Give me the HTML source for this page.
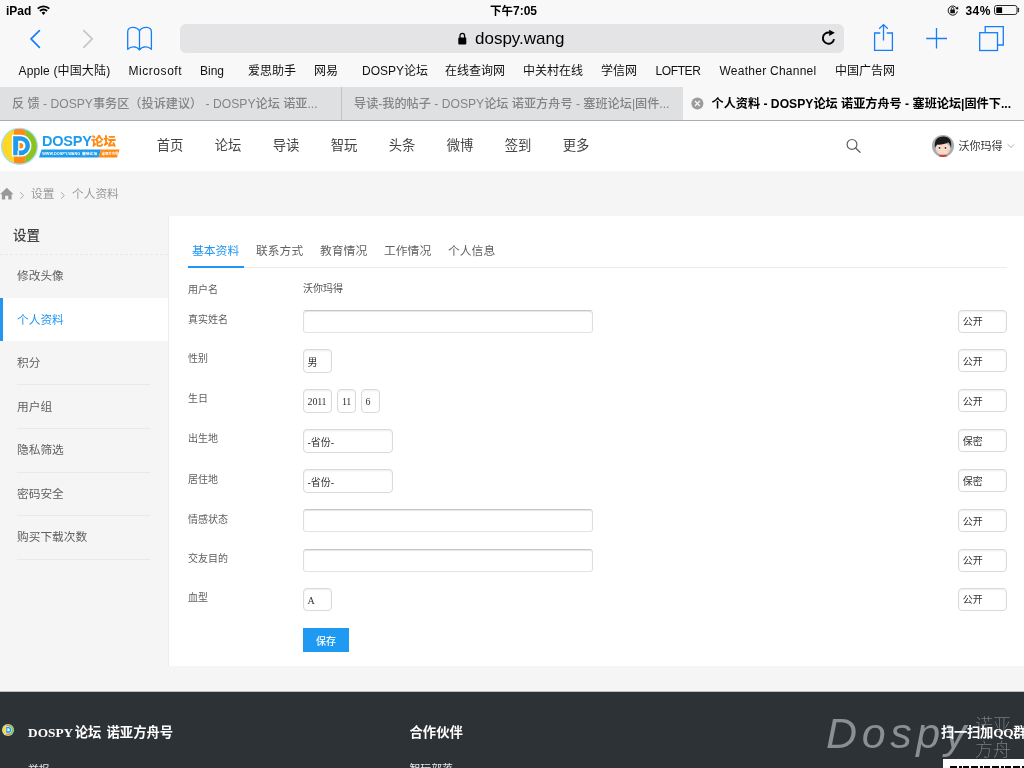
<!DOCTYPE html>
<html lang="zh-CN">
<head>
<meta charset="utf-8">
<title>个人资料 - DOSPY论坛 诺亚方舟号</title>
<style>
*{box-sizing:border-box;margin:0;padding:0}
html,body{width:1024px;height:768px;overflow:hidden;background:#f5f5f5}
body{font-family:"Liberation Sans","Noto Sans CJK SC",sans-serif;color:#333;position:relative;will-change:transform}
.abs{position:absolute}
.t{position:absolute;white-space:nowrap;line-height:1}
/* iOS chrome */
#chrome{position:absolute;left:0;top:0;width:1024px;height:121px;background:#f8f8f8}
#status .t{font-size:12px;font-weight:bold;color:#000;top:5px}
#urlbar{position:absolute;left:180px;top:24px;width:664px;height:29px;border-radius:6px;background:#e4e4e6}
#bm .t{font-size:12px;color:#111;top:65px}
#tabs{position:absolute;left:0;top:87px;width:1024px;height:34px;background:#dfe0e2;border-bottom:1px solid #acacae}
#tabs .tab{position:absolute;top:0;height:33px;font-size:12.150px;font-weight:500;line-height:34px;color:#848486;white-space:nowrap;overflow:hidden}
/* site */
#hdr{position:absolute;left:0;top:121px;width:1024px;height:50px;background:#fff}
#hdr .nav{position:absolute;top:18.300px;font-size:13.330px;color:#444;margin-left:.700px;line-height:1;white-space:nowrap}
#crumb{position:absolute;left:0;top:171px;width:1024px;height:44px;background:#f5f5f5}
#side{position:absolute;left:0;top:216px;width:168px;height:450px;background:#f5f5f5}
#side .it{position:absolute;left:17px;font-size:11.700px;color:#606060;line-height:1;white-space:nowrap}
#side .ln{position:absolute;left:17px;width:133px;height:1px;background:#e9e9e9}
#main{position:absolute;left:168px;top:216px;width:856px;height:450px;background:#fff;border-left:1px solid #ececec}
.lab{position:absolute;left:188px;font-size:10px;color:#606060;line-height:1;white-space:nowrap}
.inp{position:absolute;background:#fff;border:1px solid #dadada;border-radius:4px;box-shadow:inset 0 1px 2px rgba(0,0,0,.07);font-size:10px;color:#333;line-height:1;white-space:nowrap}
.inp.txt{border-color:#c6c6c6 #dedede #e3e3e3 #dedede;box-shadow:inset 0 1px 1px rgba(0,0,0,.10);border-radius:3.500px}
.inp span{position:absolute;left:3.500px;top:7.500px}
.inp.r span{top:6.500px;left:3.800px}
.inp.ser span{top:6.800px;left:3.600px;letter-spacing:-.2px}
.ser{font-family:"Liberation Serif","Noto Serif CJK SC",serif}
#foot{position:absolute;left:0;top:691px;width:1024px;height:77px;background:#2d3236;overflow:hidden;box-shadow:inset 0 1px 0 #bfc0c1}
</style>
</head>
<body>
<div id="chrome">
  <div id="status">
    <span class="t" style="left:6px">iPad</span>
    <span class="t" style="left:490px"><span style="font-size:11.500px">下午</span>7:05</span>
    <span class="t" style="left:965.500px;letter-spacing:.4px">34%</span>
  </div>
  <div id="urlbar"></div>
  <span class="t" style="left:475px;top:30px;font-size:17px;color:#000">dospy.wang</span>
  <div id="bm">
    <span class="t" style="left:18.500px;letter-spacing:.15px">Apple (中国大陆)</span>
    <span class="t" style="left:128.500px;letter-spacing:.55px">Microsoft</span>
    <span class="t" style="left:200px">Bing</span>
    <span class="t" style="left:248px">爱思助手</span>
    <span class="t" style="left:314px">网易</span>
    <span class="t" style="left:362px">DOSPY论坛</span>
    <span class="t" style="left:445px">在线查询网</span>
    <span class="t" style="left:523px">中关村在线</span>
    <span class="t" style="left:601px">学信网</span>
    <span class="t" style="left:655.500px;letter-spacing:-.4px">LOFTER</span>
    <span class="t" style="left:719.500px;letter-spacing:.25px">Weather Channel</span>
    <span class="t" style="left:835px">中国广告网</span>
  </div>
  <div id="tabs">
    <div class="tab" style="left:0;width:341px;padding-left:12px">反 馈 - DOSPY事务区（投诉建议） - DOSPY论坛 诺亚...</div>
    <div class="tab" style="left:341px;width:342px;padding-left:12px;border-left:1px solid #c2c3c5">导读-我的帖子 - DOSPY论坛 诺亚方舟号 - 塞班论坛|固件...</div>
    <div class="tab" style="left:683px;width:341px;padding-left:28.500px;background:#f8f8f8;color:#000;font-weight:bold">个人资料 - <b>DOSPY</b>论坛 诺亚方舟号 - 塞班论坛|固件下...</div>
  </div>
  <svg class="abs" style="left:0;top:0" width="1024" height="121" viewBox="0 0 1024 121" fill="none">
    <!-- wifi -->
    <g stroke="#000" stroke-width="1.8">
      <path d="M37.700,8.700 A8.200,8.200 0 0 1 49.300,8.700"/>
      <path d="M39.900,11 A5.100,5.100 0 0 1 47.100,11"/>
    </g>
    <path d="M41.600,12.700 A2.700,2.700 0 0 1 45.400,12.700 L43.500,14.900 Z" fill="#000"/>
    <!-- rotation lock -->
    <path d="M956.9,8.6 A4.6,4.6 0 1 0 957.3,11.3" stroke="#111" stroke-width="1"/>
    <path d="M955.3,8.9 L958.3,9.6 L958.1,6.6 Z" fill="#111"/>
    <rect x="950.3" y="9.6" width="4.6" height="3.6" rx=".5" fill="#111"/>
    <path d="M951.3,9.8 V8.7 A1.3,1.3 0 0 1 953.9,8.700 V9.8" stroke="#111" stroke-width=".9"/>
    <!-- battery -->
    <rect x="994.500" y="5.500" width="22.500" height="9" rx="2.200" stroke="#2a2a2a" stroke-width="1"/>
    <rect x="996.300" y="7.200" width="5.800" height="5.700" rx=".5" fill="#000"/>
    <path d="M1018.400,8.300 V11.700" stroke="#2a2a2a" stroke-width="1.300" stroke-linecap="round"/>
    <!-- back / forward -->
    <path d="M39.4,30.6 L31,38.9 L39.4,47.3" stroke="#147efb" stroke-width="1.7" stroke-linecap="round" stroke-linejoin="round"/>
    <path d="M83.8,30.6 L92.2,38.9 L83.800,47.3" stroke="#c6c6c6" stroke-width="1.7" stroke-linecap="round" stroke-linejoin="round"/>
    <!-- book -->
    <path d="M139.5,30.8 C136.500,26.3 127.700,26 127.700,32 V49.300 C131,45.800 137,46.200 139.500,50 C142,46.200 148,45.800 151.400,49.300 V32 C151.400,26 142.500,26.300 139.500,30.800 V50" stroke="#147efb" stroke-width="1.3" stroke-linejoin="round"/>
    <!-- lock -->
    <rect x="458.300" y="37.500" width="8" height="7" rx="1" fill="#000"/>
    <path d="M460,38 V35.800 A2.300,2.500 0 0 1 464.600,35.800 V38" stroke="#000" stroke-width="1.300"/>
    <!-- reload -->
    <path d="M829.500,32.600 A5.600,5.600 0 1 0 834,39.100" stroke="#000" stroke-width="1.900"/>
    <path d="M829.200,29.700 L834.800,32.800 L829.200,35.900 Z" fill="#000"/>
    <!-- share -->
    <path d="M880.300,33 H874.600 V50.300 H892.400 V33 H886.700" stroke="#147efb" stroke-width="1.300"/>
    <path d="M883.500,40.500 V25 M879.200,28.800 L883.500,24.600 L887.800,28.800" stroke="#147efb" stroke-width="1.300"/>
    <!-- plus -->
    <path d="M926.200,38.500 H947 M936.500,28.100 V48.600" stroke="#147efb" stroke-width="1.300"/>
    <!-- tabs -->
    <rect x="979.700" y="32.700" width="17.800" height="17.800" stroke="#147efb" stroke-width="1.300"/>
    <path d="M985.200,32.200 V26.700 H1003.300 V45 H998" stroke="#147efb" stroke-width="1.300"/>
    <!-- tab close -->
    <circle cx="697.400" cy="103.500" r="6" fill="#9b9b9b"/>
    <path d="M694.900,101 L699.900,106 M699.900,101 L694.900,106" stroke="#f8f8f8" stroke-width="1.200"/>
  </svg>
</div>

<div id="hdr">
  <svg class="abs" style="left:0;top:0" width="1024" height="50" viewBox="0 121 1024 50">
    <!-- logo badge -->
    <defs><clipPath id="lc"><circle cx="19.500" cy="146.300" r="17.300"/></clipPath></defs>
    <circle cx="19.500" cy="146.300" r="18.600" fill="#a9dcfa"/>
    <g clip-path="url(#lc)">
      <rect x="0" y="126" width="14" height="42" fill="#fdd825"/>
      <rect x="14" y="126" width="11.500" height="42" fill="#ff8a14"/>
      <rect x="25.500" y="126" width="14" height="42" fill="#8ec31f"/>
    </g>
    <path d="M12.500,135.500 H20.500 A10.200,10.200 0 0 1 20.500,155.900 H12.500 Z" fill="#1e9bea" stroke="#fff" stroke-width="1.400" stroke-linejoin="round"/>
    <path d="M18.200,140.800 H20.600 A4.900,4.900 0 0 1 20.600,150.600 H18.200 Z" fill="#fff"/>
    <path d="M18.200,150.600 V156.500" stroke="#fff" stroke-width="1.300"/>
    <path d="M19.500,143 H20.600 A2.700,2.700 0 0 1 20.600,148.400 H19.500 Z" fill="#ff8a14"/>
    <!-- banner -->
    <path d="M41.600,149.500 H101 L98.600,157.600 H39 Z" fill="#1e9bea"/>
    <path d="M101,149.500 H119.500 L117,157.600 H98.600 Z" fill="#ff8a14"/>
    <text x="42.200" y="155.300" font-family="Liberation Sans, sans-serif" font-weight="bold" font-size="4.100" fill="#fff" textLength="38" lengthAdjust="spacingAndGlyphs">WWW.DOSPY.WANG</text>
    <text x="82" y="155.300" font-family="Liberation Sans, Noto Sans CJK SC, sans-serif" font-weight="bold" font-size="3.800" fill="#fff">塞班论坛</text>
    <text x="101.500" y="155.200" font-family="Liberation Sans, Noto Sans CJK SC, sans-serif" font-weight="bold" font-size="3.400" fill="#fff">诺亚方舟号</text>
    <!-- search -->
    <circle cx="852" cy="144.400" r="4.900" fill="none" stroke="#5a5f66" stroke-width="1.200"/>
    <path d="M855.600,148 L860,152.300" stroke="#5a5f66" stroke-width="1.300" stroke-linecap="round"/>
    <!-- avatar -->
    <defs><clipPath id="ac"><circle cx="943" cy="145.900" r="11"/></clipPath></defs>
    <circle cx="943" cy="145.900" r="11" fill="#a4aeb3"/>
    <g clip-path="url(#ac)">
      <ellipse cx="943" cy="157.600" rx="4.800" ry="3.200" fill="#d63a35"/>
      <ellipse cx="943" cy="148.800" rx="7.300" ry="6" fill="#fbdac6"/>
      <path d="M935,148.300 C933.800,140 937.500,136.600 943.400,136.600 C949.500,136.600 952.300,140.500 951,148.300 C950.600,146 950,143.800 948.300,142.300 C946,144.200 940.500,144.800 937.300,144.600 C936,145.500 935.400,146.800 935,148.300 Z" fill="#1d1a1a"/>
      <circle cx="939.300" cy="147.900" r="1.500" fill="#fff"/>
      <circle cx="945.700" cy="147.900" r="1.500" fill="#fff"/>
      <circle cx="939.500" cy="147.900" r=".900" fill="#1d1a1a"/>
      <circle cx="945.500" cy="147.900" r=".900" fill="#1d1a1a"/>
      <circle cx="937.300" cy="150.600" r="1.100" fill="#f6b9a8" opacity=".7"/>
      <circle cx="948.300" cy="150.600" r="1.100" fill="#f6b9a8" opacity=".7"/>
    </g>
    <!-- chevron -->
    <path d="M1007.600,144.200 L1011,147.500 L1014.400,144.200" fill="none" stroke="#b0b0b0" stroke-width="1"/>
  </svg>
  <span class="t" style="left:42px;top:12.500px;font-size:14.500px;font-weight:bold;color:#1e9bea;letter-spacing:-.2px">DOSPY</span>
  <span class="t" style="left:91px;top:14.500px;font-size:12.500px;font-weight:900;color:#ff8a14;font-family:'Liberation Sans','Noto Sans CJK SC',sans-serif">论坛</span>
  <span class="nav" style="left:156px">首页</span>
  <span class="nav" style="left:214px">论坛</span>
  <span class="nav" style="left:272px">导读</span>
  <span class="nav" style="left:330px">智玩</span>
  <span class="nav" style="left:388px">头条</span>
  <span class="nav" style="left:446px">微博</span>
  <span class="nav" style="left:504px">签到</span>
  <span class="nav" style="left:562px">更多</span>
  <span class="t" style="left:958.500px;top:19.600px;font-size:11px;color:#333">沃你玛得</span>
</div>
<div id="crumb">
  <svg class="abs" style="left:0;top:0" width="130" height="44" viewBox="0 171 130 44">
    <path d="M0,194.200 L6.800,187.800 L13.500,194.200 H11.600 V199.500 H8.300 V195.800 H5.200 V199.500 H1.900 V194.200 Z" fill="#999"/>
    <path d="M20.200,192.200 L23.600,195.500 L20.200,198.800" fill="none" stroke="#aaa" stroke-width="1"/>
    <path d="M61,192.200 L64.400,195.500 L61,198.800" fill="none" stroke="#aaa" stroke-width="1"/>
  </svg>
  <span class="t" style="left:31px;top:17.400px;font-size:11.700px;color:#999">设置</span>
  <span class="t" style="left:72px;top:17.400px;font-size:11.700px;color:#999">个人资料</span>
</div>
<div id="side">
  <span class="t" style="left:13px;top:13.400px;font-size:13.500px;font-weight:500;color:#444">设置</span>
  <div class="abs" style="left:0;top:38px;width:168px;height:0;border-top:1px dashed #e9e9e9"></div>
  <div class="abs" style="left:0;top:82px;width:170px;height:43px;background:#fff;border-left:3px solid #2196f3"></div>
  <span class="it" style="top:53.5px">修改头像</span>
  <span class="it" style="top:97.5px;color:#2196f3">个人资料</span>
  <span class="it" style="top:140.5px">积分</span>
  <span class="it" style="top:184.5px">用户组</span>
  <span class="it" style="top:227.7px">隐私筛选</span>
  <span class="it" style="top:271.7px">密码安全</span>
  <span class="it" style="top:314.7px">购买下载次数</span>
  <div class="ln" style="top:168px"></div>
  <div class="ln" style="top:212px"></div>
  <div class="ln" style="top:256px"></div>
  <div class="ln" style="top:299px"></div>
  <div class="ln" style="top:343px"></div>
</div>
<div id="main"></div>
<div id="form">
  <span class="t" style="left:192px;top:246px;font-size:11.800px;color:#2196f3">基本资料</span>
  <span class="t" style="left:256px;top:246px;font-size:11.800px;color:#626262">联系方式</span>
  <span class="t" style="left:320px;top:246px;font-size:11.800px;color:#626262">教育情况</span>
  <span class="t" style="left:384px;top:246px;font-size:11.800px;color:#626262">工作情况</span>
  <span class="t" style="left:448px;top:246px;font-size:11.800px;color:#626262">个人信息</span>
  <div class="abs" style="left:187px;top:267px;width:820px;height:1px;background:#ebebeb"></div>
  <div class="abs" style="left:188px;top:265.500px;width:56px;height:2px;background:#2196f3"></div>

  <span class="lab" style="top:285px">用户名</span>
  <span class="lab" style="top:315px">真实姓名</span>
  <span class="lab" style="top:354px">性别</span>
  <span class="lab" style="top:394px">生日</span>
  <span class="lab" style="top:434px">出生地</span>
  <span class="lab" style="top:475px">居住地</span>
  <span class="lab" style="top:515px">情感状态</span>
  <span class="lab" style="top:554px">交友目的</span>
  <span class="lab" style="top:593px">血型</span>
  <span class="t" style="left:303px;top:284px;font-size:10px;color:#555">沃你玛得</span>

  <div class="inp txt" style="left:303px;top:309.700px;width:290px;height:23px"></div>
  <div class="inp" style="left:303px;top:349px;width:29px;height:23.500px"><span>男</span></div>
  <div class="inp ser" style="left:303px;top:389px;width:29px;height:23.500px"><span>2011</span></div>
  <div class="inp ser" style="left:337.300px;top:389px;width:18.500px;height:23.500px"><span>11</span></div>
  <div class="inp ser" style="left:361px;top:389px;width:18.800px;height:23.500px"><span>6</span></div>
  <div class="inp" style="left:303px;top:429px;width:90px;height:23.500px"><span>-省份-</span></div>
  <div class="inp" style="left:303px;top:469px;width:90px;height:23.500px"><span>-省份-</span></div>
  <div class="inp txt" style="left:303px;top:509.200px;width:290px;height:23px"></div>
  <div class="inp txt" style="left:303px;top:548.700px;width:290px;height:23px"></div>
  <div class="inp ser" style="left:303px;top:588px;width:29px;height:23px"><span>A</span></div>

  <div class="inp r" style="left:958px;top:309.7px;width:49px;height:23.200px"><span>公开</span></div>
  <div class="inp r" style="left:958px;top:349px;width:49px;height:23.200px"><span>公开</span></div>
  <div class="inp r" style="left:958px;top:389px;width:49px;height:23.200px"><span>公开</span></div>
  <div class="inp r" style="left:958px;top:429px;width:49px;height:23.200px"><span>保密</span></div>
  <div class="inp r" style="left:958px;top:469px;width:49px;height:23.200px"><span>保密</span></div>
  <div class="inp r" style="left:958px;top:509px;width:49px;height:23.200px"><span>公开</span></div>
  <div class="inp r" style="left:958px;top:548.5px;width:49px;height:23.200px"><span>公开</span></div>
  <div class="inp r" style="left:958px;top:587.5px;width:49px;height:23.200px"><span>公开</span></div>

  <div class="abs" style="left:303px;top:627.700px;width:46px;height:24px;background:#1e9af2;color:#fff;font-size:10px;font-weight:500;line-height:27px;text-align:center">保存</div>
</div>

<div id="foot">
  <svg class="abs" style="left:0;top:0" width="20" height="77" viewBox="0 691 20 77">
    <defs><clipPath id="fc"><circle cx="8" cy="730" r="5.400"/></clipPath></defs>
    <circle cx="8" cy="730" r="6" fill="#a9dcfa"/>
    <g clip-path="url(#fc)">
      <rect x="2" y="724" width="4.300" height="12" fill="#fdd825"/>
      <rect x="6.300" y="724" width="3.700" height="12" fill="#ff8a14"/>
      <rect x="10" y="724" width="4" height="12" fill="#8ec31f"/>
    </g>
    <path d="M5.800,726.500 H8.300 A3.400,3.400 0 0 1 8.300,733.300 H5.800 Z" fill="#1e9bea" stroke="#fff" stroke-width=".6"/>
    <path d="M7.400,728.300 H8.300 A1.500,1.500 0 0 1 8.300,731.300 H7.400 Z" fill="#fff"/>
  </svg>
  <span class="t" style="left:28px;top:34.500px;font-size:13.330px;font-weight:bold;color:#fff"><span class="ser" style="margin-right:1.500px">DOSPY</span>论坛<span style="margin-left:5.200px">诺亚方舟号</span></span>
  <span class="t" style="left:409.500px;top:35px;font-size:13.330px;font-weight:bold;color:#fff">合作伙伴</span>
  <span class="t" style="left:28px;top:73.500px;font-size:10.830px;color:#e8e8e8">举报</span>
  <span class="t" style="left:409.500px;top:72.500px;font-size:10.830px;color:#e8e8e8">智玩部落</span>
  <span class="t" style="left:826px;top:21px;font-size:43px;font-style:italic;color:#8b8f93;letter-spacing:4.600px">Dospy</span>
  <span class="t" style="left:975px;top:23px;font-size:18px;line-height:24px;font-weight:100;color:#969ca0;white-space:normal;width:36px;font-family:'Liberation Sans','Noto Sans CJK SC',sans-serif">诺亚方舟</span>
  <span class="t" style="left:941px;top:34.500px;font-size:13.330px;font-weight:bold;color:#fff;letter-spacing:-.3px">扫一扫加<span class="ser">QQ</span>群</span>
  <div class="abs" style="left:943px;top:68px;width:90px;height:20px;background:#fff"></div>
  <div class="abs" style="left:950px;top:74.500px;width:80px;height:10px;background:repeating-linear-gradient(90deg,#000 0 7px,#fff 7px 9px,#000 9px 12px,#fff 12px 13px,#000 13px 19px,#fff 19px 21px)"></div>
</div>
</body>
</html>
